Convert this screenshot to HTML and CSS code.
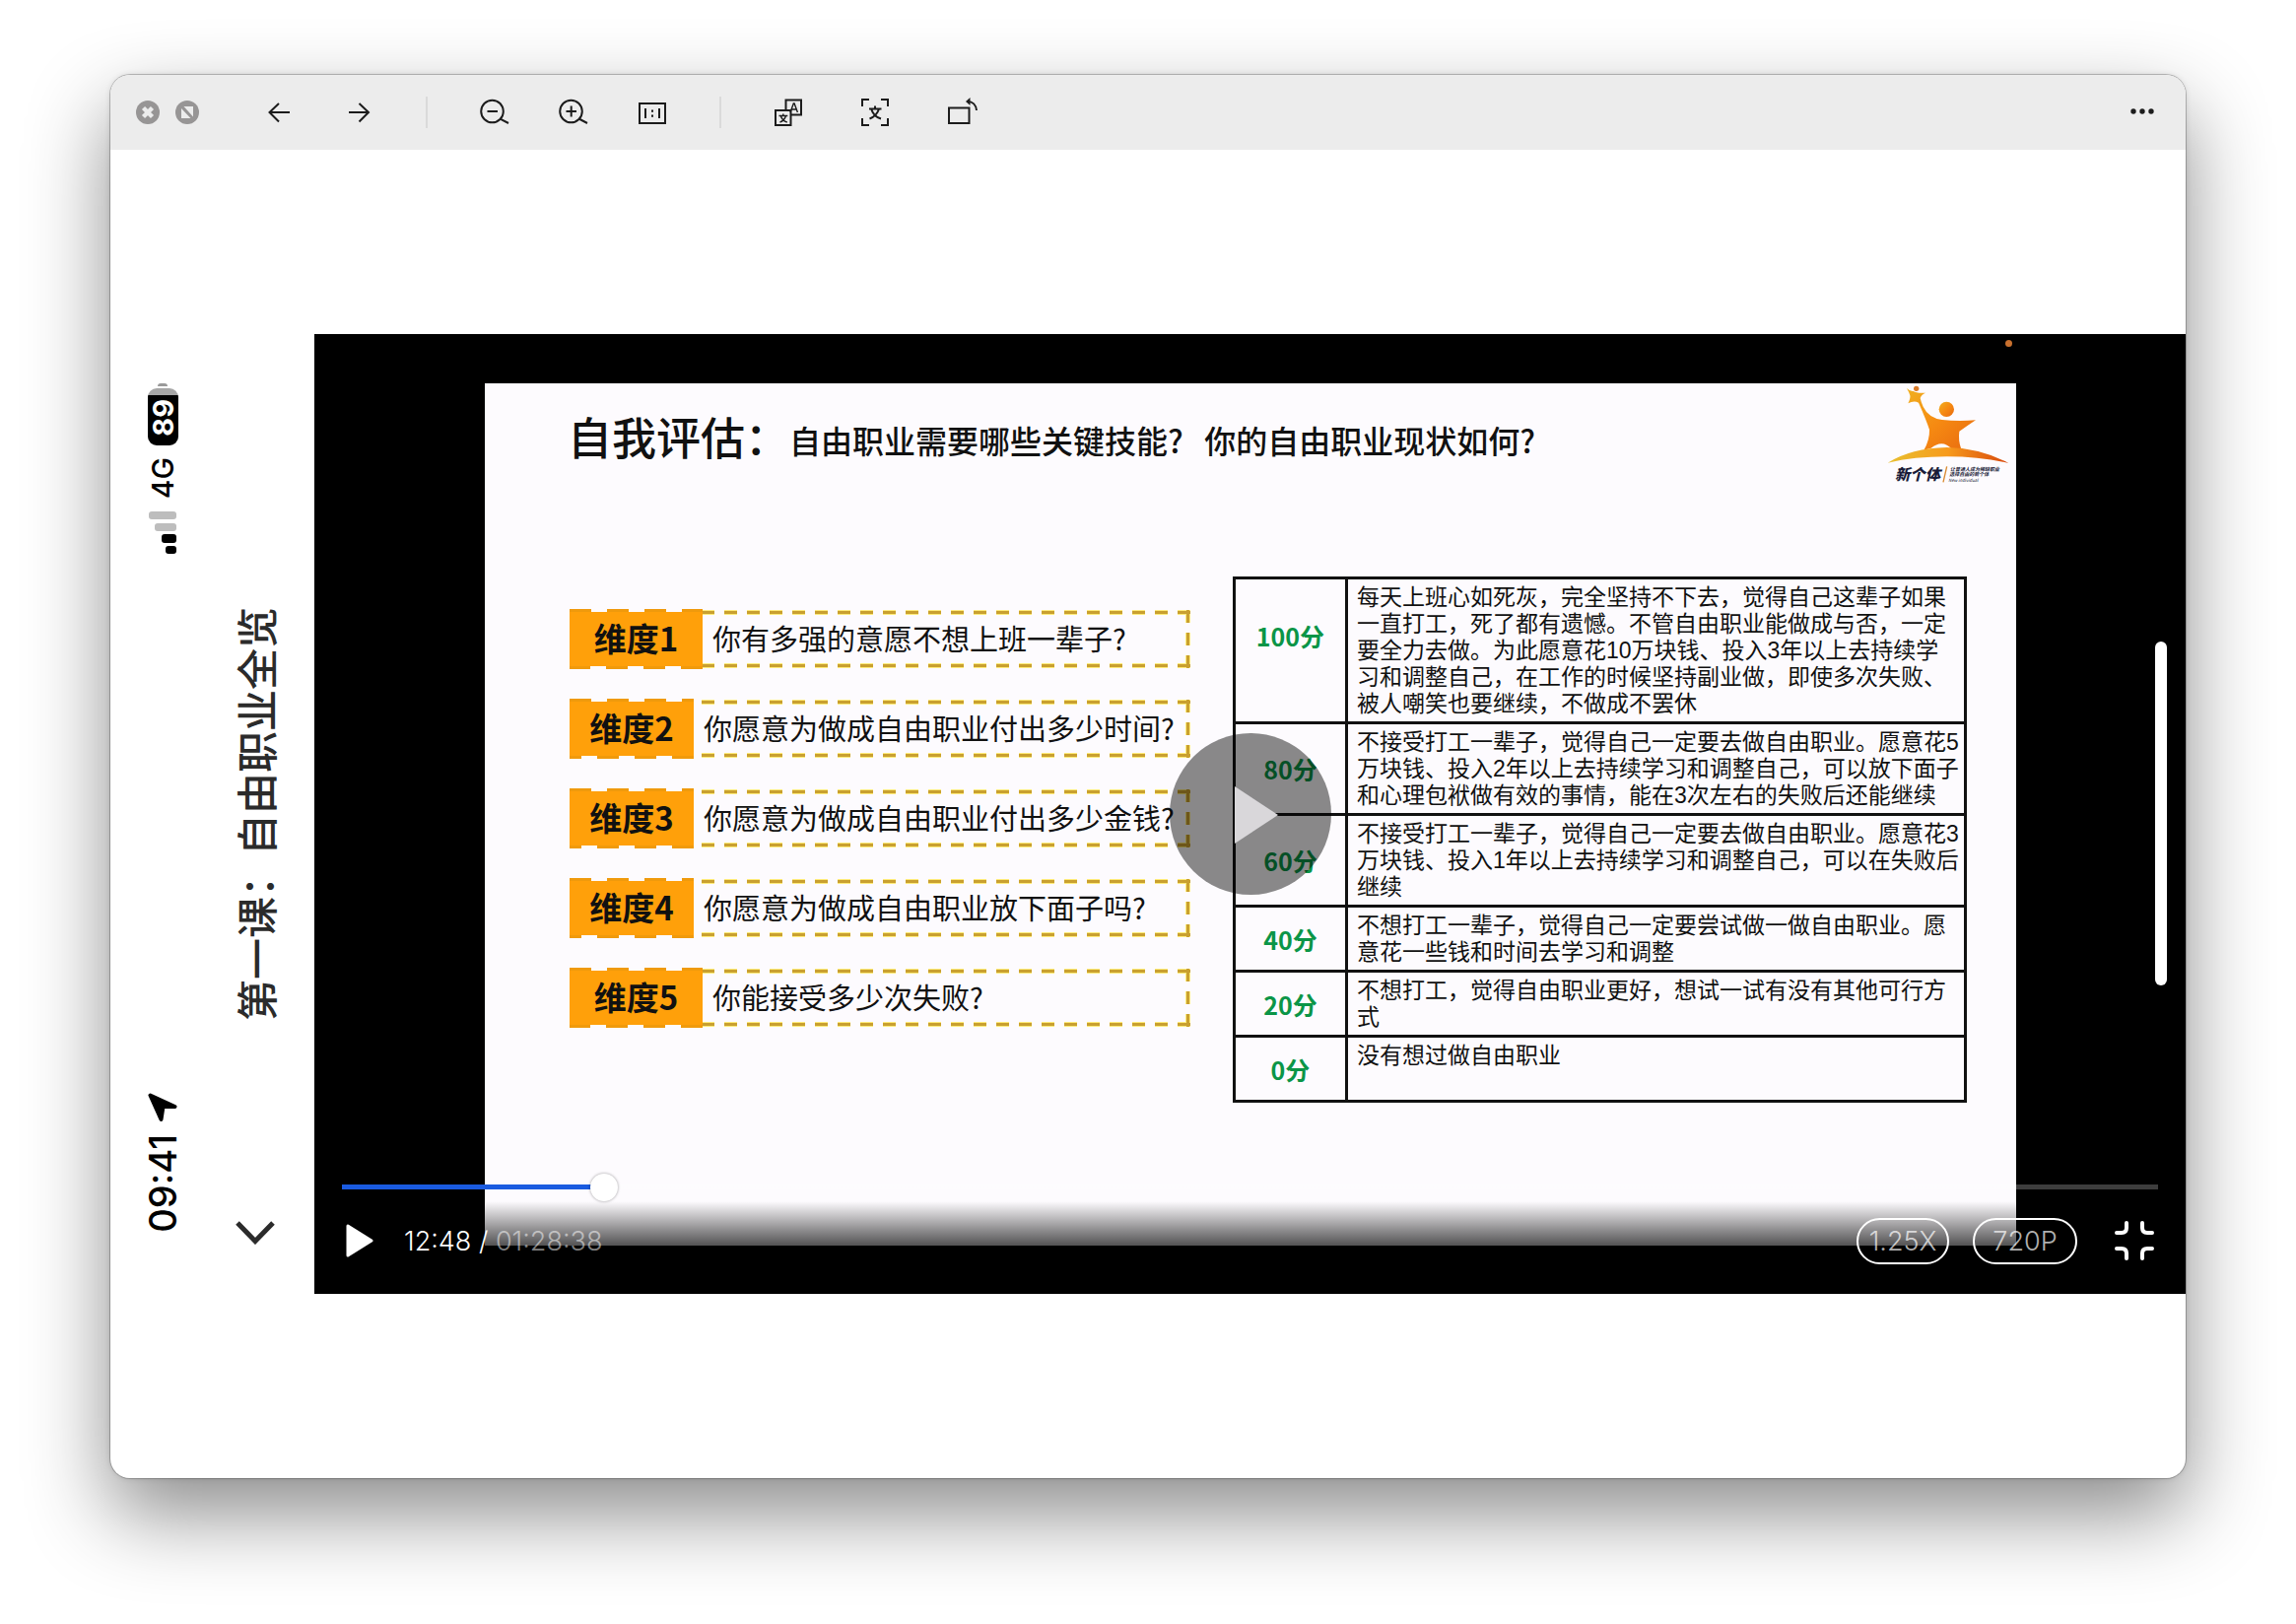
FILE: index.html
```
<!DOCTYPE html>
<html lang="zh-CN">
<head>
<meta charset="utf-8">
<meta name="viewport" content="width=device-width, initial-scale=1">
<title>第一课：自由职业全览</title>
<link rel="stylesheet" href="styles.css">
</head>
<body>
<main class="window">
  <header class="toolbar">
    <div class="window-controls">
      <button class="light" aria-label="关闭"><svg viewBox="0 0 24 24"><circle cx="12" cy="12" r="12" fill="#979595"/><path d="M7.500 7.500l9 9M16.500 7.500l-9 9" stroke="#ececec" stroke-width="4.400"/></svg></button>
      <button class="light" aria-label="全屏"><svg viewBox="0 0 24 24"><circle cx="12" cy="12" r="12" fill="#979595"/><path d="M8.500 6H18v10.500zM6 8v10h9.500z" fill="#ececec"/></svg></button>
    </div>
    <div class="tools">
      <button class="tool" aria-label="上一张"><svg viewBox="0 0 32 32"><path d="M26 16H5.500M15 7l-9.500 9 9.500 9.500"/></svg></button>
      <button class="tool" aria-label="下一张"><svg viewBox="0 0 32 32"><path d="M6 16h20M16.500 7l9.500 9-9.500 9.500"/></svg></button>
    </div>
    <span class="divider"></span>
    <div class="tools">
      <button class="tool" aria-label="缩小"><svg viewBox="0 0 32 32"><circle cx="13.500" cy="15" r="11.300"/><path d="M8.500 15h10.500M21.500 22.500l8.500 4.500"/></svg></button>
      <button class="tool" aria-label="放大"><svg viewBox="0 0 32 32"><circle cx="13.500" cy="15" r="11.300"/><path d="M8.500 15h10.500M13.700 9.500v11M21.500 22.500l8.500 4.500"/></svg></button>
      <button class="tool" aria-label="实际大小"><svg viewBox="0 0 32 32"><path d="M3 7h26v20H3zM9 12v10M23 12v10M16 13.500v2.200M16 18.500v2.200"/></svg></button>
    </div>
    <span class="divider"></span>
    <div class="tools tools-wide">
      <button class="tool" aria-label="翻译"><svg viewBox="0 0 32 32"><path d="M13.500 13V3.500h15.500v15h-10M3 14h15.500v15H3z"/><path d="M18 16l3.300-9h.8l3.300 9M19.300 13h4.700M6.500 19.500h8.800M10.800 17.500v2M7.500 26c3-1 5-3 6-6.500M8.300 19.500c1 3.500 3 5.500 6.500 6.500" stroke-width="1.400"/></svg></button>
      <button class="tool" aria-label="提取文字"><svg viewBox="0 0 32 32"><path d="M3 10V3h7M22 3h7v7M29 22v7h-7M10 29H3v-7"/><path d="M10 12.500h12.500M16 9.500v3M10.500 22.500c5-2 8-5 9.500-10M12.200 12.500c1.300 5 4.800 8.500 9.800 10"/></svg></button>
      <button class="tool" aria-label="旋转"><svg viewBox="0 0 32 32"><path d="M3 11.500h20.500v15.500H3zM22 5c5 0 8.500 3.500 9 9"/><path d="M20 5l4.500-4v8z" fill="#1c1c1c" stroke="none"/></svg></button>
    </div>
    <button class="tool more" aria-label="更多"><svg viewBox="0 0 32 32"><g fill="#1c1c1c" stroke="none"><circle cx="7" cy="15" r="2.700"/><circle cx="16" cy="15" r="2.700"/><circle cx="25" cy="15" r="2.700"/></g></svg></button>
  </header>

  <section class="viewer">
    <div class="photo">
      <aside class="phone-bar">
        <div class="status">
          <div class="status-group">
            <div class="battery"><span class="battery-cap"></span><span class="battery-body"><span class="sideways">89</span></span></div>
            <span class="sideways network">4G</span>
            <svg class="signal" viewBox="0 0 28 44"><g fill="#bdbdbd"><rect width="28" height="8" rx="3"/><rect x="6" y="12" width="22" height="8" rx="3"/></g><rect x="13" y="23" width="15" height="9" rx="3"/><rect x="17" y="35" width="11" height="8" rx="3"/></svg>
          </div>
          <div class="status-group">
            <svg class="location" viewBox="0 0 30 30"><path d="M2.500 2.500L27.500 14H15.500l-2 13z" stroke="#000" stroke-width="4" stroke-linejoin="round"/></svg>
            <span class="sideways clock">09:41</span>
          </div>
        </div>
        <div class="lesson">
          <h1 class="sideways lesson-title">第一课：自由职业全览</h1>
          <button class="back" aria-label="返回"><svg viewBox="0 0 40 24"><path d="M2 2l18 18.500L38 2" fill="none" stroke="#2b2b2b" stroke-width="5"/></svg></button>
        </div>
      </aside>

      <div class="video">
        <article class="slide">
          <header class="slide-head">
            <h2 class="slide-title">自我评估：<span class="slide-subtitle">自由职业需要哪些关键技能?   你的自由职业现状如何?</span></h2>
            <svg class="logo" viewBox="40 183 384 306" role="img" aria-label="新个体">
              <defs>
                <linearGradient id="body" x1="0" x2="1" y1="0" y2="1"><stop offset="0" stop-color="#f0b020"/><stop offset=".5" stop-color="#f68a12"/><stop offset="1" stop-color="#e86a10"/></linearGradient>
                <linearGradient id="arc" x1="0" x2="1"><stop offset="0" stop-color="#e8c030"/><stop offset=".5" stop-color="#f79a1c"/><stop offset="1" stop-color="#d8480c"/></linearGradient>
              </defs>
              <path d="M106 192Q118 203 126 201Q136 208 163 206Q150 212 147 222Q150 236 156 248Q172 282 214 288Q262 294 316 289Q288 308 266 323Q262 350 272 378H244Q215 345 180 374L158 380Q176 350 175 318Q166 290 142 236Q128 228 110 238Q118 222 116 214Q113 204 106 192Z" fill="url(#body)"/>
              <circle cx="135" cy="193" r="8" fill="#d87a28"/>
              <circle cx="227" cy="256" r="23" fill="url(#body)"/>
              <path d="M48 419Q120 374 228 372Q330 374 416 420Q330 400 228 400Q130 400 48 419Z" fill="url(#arc)"/>
              <path d="M228 430L217 478" stroke="#d98a30" stroke-width="4"/>
              <g class="logo-text">
                <text x="70" y="470" font-size="46" font-weight="900">新个体</text>
                <text x="238" y="443" font-size="15" font-weight="700">让普通人成为稀缺职业</text>
                <text x="236" y="460" font-size="15" font-weight="700">选择自由的新个体</text>
                <text x="233" y="477" font-size="13">New individual</text>
              </g>
            </svg>
          </header>

          <div class="slide-body">
            <ol class="dimensions">
              <li class="dimension"><b class="badge badge-wide">维度1</b><span class="question">你有多强的意愿不想上班一辈子?</span></li>
              <li class="dimension"><b class="badge">维度2</b><span class="question">你愿意为做成自由职业付出多少时间?</span></li>
              <li class="dimension"><b class="badge">维度3</b><span class="question">你愿意为做成自由职业付出多少金钱?</span></li>
              <li class="dimension"><b class="badge">维度4</b><span class="question">你愿意为做成自由职业放下面子吗?</span></li>
              <li class="dimension"><b class="badge badge-wide">维度5</b><span class="question">你能接受多少次失败?</span></li>
            </ol>

            <table class="scores">
              <tbody>
                <tr><th scope="row" class="raised">100分</th><td>每天上班心如死灰，完全坚持不下去，觉得自己这辈子如果<br>一直打工，死了都有遗憾。不管自由职业能做成与否，一定<br>要全力去做。为此愿意花10万块钱、投入3年以上去持续学<br>习和调整自己，在工作的时候坚持副业做，即使多次失败、<br>被人嘲笑也要继续，不做成不罢休</td></tr>
                <tr><th scope="row">80分</th><td>不接受打工一辈子，觉得自己一定要去做自由职业。愿意花5<br>万块钱、投入2年以上去持续学习和调整自己，可以放下面子<br>和心理包袱做有效的事情，能在3次左右的失败后还能继续</td></tr>
                <tr><th scope="row">60分</th><td>不接受打工一辈子，觉得自己一定要去做自由职业。愿意花3<br>万块钱、投入1年以上去持续学习和调整自己，可以在失败后<br>继续</td></tr>
                <tr><th scope="row">40分</th><td>不想打工一辈子，觉得自己一定要尝试做一做自由职业。愿<br>意花一些钱和时间去学习和调整</td></tr>
                <tr><th scope="row">20分</th><td>不想打工，觉得自由职业更好，想试一试有没有其他可行方<br>式</td></tr>
                <tr><th scope="row">0分</th><td>没有想过做自由职业<br>&nbsp;</td></tr>
              </tbody>
            </table>
          </div>
        </article>

        <span class="mic-dot"></span>
        <button class="big-play" aria-label="播放"><svg viewBox="0 0 164 164"><path d="M66 54v58l44-29z"/></svg></button>
        <span class="volume"></span>

        <div class="controls">
          <input class="seek" type="range" min="0" max="1000" value="139" aria-label="播放进度">
          <div class="control-row">
            <button class="play" aria-label="播放"><svg viewBox="0 0 28 34"><path d="M2 2v30l24-15z" fill="#fff" stroke="#fff" stroke-width="3" stroke-linejoin="round"/></svg></button>
            <span class="time">12:48 / <span class="duration">01:28:38</span></span>
            <button class="pill">1.25X</button>
            <button class="pill pill-wide">720P</button>
            <button class="shrink" aria-label="退出全屏"><svg viewBox="0 0 40 40" fill="none" stroke="#fff" stroke-width="4" stroke-linecap="round"><path d="M12 2v5q0 5-5 5H2M28 2v5q0 5 5 5h5M12 38v-5q0-5-5-5H2M28 38v-5q0-5 5-5h5"/></svg></button>
          </div>
        </div>
      </div>
    </div>
  </section>
</main>
</body>
</html>
```
FILE: styles.css
```
* { box-sizing: border-box; }

body {
  margin: 0;
  min-height: 100vh;
  padding: 76px 112px 148px;
  display: flex;
  background: #fff;
  color: #111;
  font-family: "Noto Sans CJK SC", sans-serif;
}

button {
  margin: 0;
  padding: 0;
  border: 0;
  background: none;
  color: inherit;
  font: inherit;
}

svg { display: block; width: 100%; height: 100%; }
h1, h2, ol { margin: 0; padding: 0; }

.window {
  flex: 1;
  min-width: 0;
  display: flex;
  flex-direction: column;
  overflow: hidden;
  border-radius: 20px;
  background: #fff;
  box-shadow: 0 0 0 1px rgba(0, 0, 0, .22), 0 0 6px rgba(0, 0, 0, .12), 0 36px 84px rgba(0, 0, 0, .46);
}

/* Toolbar */
.toolbar {
  display: flex;
  align-items: center;
  height: 76px;
  padding: 0 28px 0 26px;
  background: #ececec;
}
.window-controls { display: flex; gap: 16px; margin-right: 66px; }
.light { width: 24px; height: 24px; }
.tools { display: flex; gap: 48px; }
.tools-wide { gap: 56px; }
.tool { width: 32px; height: 32px; }
.tool svg { fill: none; stroke: #1c1c1c; stroke-width: 2; }
.divider { width: 2px; height: 32px; margin: 0 52px; background: #dadada; }
.more { margin-left: auto; }

/* Viewer */
.viewer { flex: 1; display: flex; align-items: center; }
.photo { flex: 1; min-width: 0; display: flex; }

.phone-bar { flex: none; display: flex; width: 207px; padding: 50px 0 50px 37px; }
.sideways {
  writing-mode: vertical-rl;
  text-orientation: sideways;
  transform: rotate(180deg);
  white-space: nowrap;
}
.status {
  display: flex;
  flex-direction: column;
  justify-content: space-between;
  width: 32px;
  padding-bottom: 12px;
  color: #000;
  font-family: Inter, sans-serif;
}
.status-group { display: flex; flex-direction: column; align-items: center; gap: 12px; }
.battery { display: flex; flex-direction: column; align-items: center; gap: 2px; }
.battery-cap { width: 10px; height: 3px; border-radius: 6px 6px 0 0; background: #9a9a9a; }
.battery-body {
  display: flex;
  align-items: flex-end;
  justify-content: center;
  width: 31px;
  height: 58px;
  padding-bottom: 10px;
  border-radius: 9px;
  background: linear-gradient(#a6a6a6 7px, #000 7px);
  color: #fff;
  font-size: 29px;
  font-weight: 700;
  line-height: 31px;
}
.network { font-size: 30px; font-weight: 500; line-height: 32px; }
.signal { width: 28px; height: 44px; }
.location { width: 30px; height: 30px; }
.clock { font-size: 38px; font-weight: 500; line-height: 32px; }

.lesson {
  display: flex;
  flex-direction: column;
  justify-content: flex-end;
  align-items: center;
  gap: 203px;
  width: 42px;
  margin-left: 57px;
}
.lesson-title { color: #2b2b2b; font-size: 42px; font-weight: 500; line-height: 42px; }
.back { width: 40px; height: 24px; }

/* Video */
.video {
  position: relative;
  flex: 1;
  min-width: 0;
  padding: 50px 172px 49px 173px;
  background: #000;
}
.slide { aspect-ratio: 16 / 9; background: #fdfbfe; }
.slide-head {
  display: flex;
  justify-content: space-between;
  align-items: flex-start;
  height: 104px;
  padding: 2px 5px 0 84px;
}
.slide-title {
  padding-top: 20px;
  font-size: 45px;
  font-weight: 500;
  line-height: 64px;
  white-space: pre;
}
.slide-subtitle { font-size: 32px; vertical-align: 2px; }
.logo { width: 128px; height: 102px; }
.logo-text { fill: #1a1c38; font-style: italic; }

.slide-body { display: flex; align-items: flex-start; gap: 43px; padding: 92px 50px 0 86px; }

.dimensions {
  display: grid;
  gap: 32px;
  width: 630px;
  padding-top: 34px;
  list-style: none;
}
.dimension {
  --gold: #c9a030 0 13px, transparent 13px 23px;
  --glow: #ffec7a 0 13px, transparent 13px 23px;
  display: flex;
  height: 59px;
  line-height: 57px;
  white-space: nowrap;
  background:
    repeating-linear-gradient(to left, var(--gold)) left top 1px / 100% 3px no-repeat,
    repeating-linear-gradient(to left, var(--gold)) left bottom 1px / 100% 3px no-repeat,
    repeating-linear-gradient(to bottom, var(--gold)) right 1px top / 3px 100% no-repeat,
    repeating-linear-gradient(to left, var(--glow)) top / 100% 5px no-repeat,
    repeating-linear-gradient(to left, var(--glow)) bottom / 100% 5px no-repeat,
    repeating-linear-gradient(to bottom, var(--glow)) right / 5px 100% no-repeat;
}
.badge {
  --edge: #f09a0c 0 22px, transparent 22px 38px;
  width: 126px;
  margin: -1px 0;
  padding: 2px 0;
  background:
    repeating-linear-gradient(to right, var(--edge)) top / 100% 3px no-repeat,
    repeating-linear-gradient(to left, var(--edge)) bottom / 100% 3px no-repeat,
    linear-gradient(#ffa00a, #ffa00a) center / 100% calc(100% - 6px) no-repeat #fdfbfe;
  font-size: 33px;
  font-weight: 700;
  line-height: 55px;
  text-align: center;
}
.badge-wide { width: 135px; }
.question { padding-left: 10px; font-size: 29px; }

.scores { flex: 1; border-collapse: collapse; }
.scores th,
.scores td { border: 3px solid #111; }
.scores th {
  width: 114px;
  padding: 0;
  color: #0b9547;
  font-size: 25px;
  font-weight: 700;
  line-height: 32px;
}
.scores .raised { padding-bottom: 30px; }
.scores td {
  padding: 5px 0 4px 9px;
  font-family: "Liberation Sans", "Noto Sans CJK SC", sans-serif;
  font-size: 23px;
  line-height: 27px;
  white-space: nowrap;
}

/* Player overlays */
.mic-dot {
  position: absolute;
  top: 6px;
  right: 176px;
  width: 7px;
  height: 7px;
  border-radius: 50%;
  background: #c8702e;
}
.big-play {
  position: absolute;
  top: 50%;
  left: 50%;
  width: 164px;
  height: 164px;
  border-radius: 50%;
  background: rgba(0, 0, 0, .46);
  transform: translate(-50%, -50%);
}
.big-play path { fill: #d9d7da; }
.volume {
  position: absolute;
  top: 312px;
  right: 19px;
  width: 12px;
  height: 349px;
  border-radius: 6px;
  background: #fff;
}
.controls { position: absolute; right: 0; bottom: 0; left: 0; }
.seek {
  display: block;
  appearance: none;
  width: calc(100% - 56px);
  height: 28px;
  margin: 0 28px;
  background: linear-gradient(to right, #1a5be0 14%, rgba(255, 255, 255, .24) 14%) center / 100% 5px no-repeat;
}
.seek::-webkit-slider-thumb {
  appearance: none;
  width: 28px;
  height: 28px;
  border-radius: 50%;
  background: #fff;
  box-shadow: 0 0 3px rgba(0, 0, 0, .4);
}
.control-row {
  display: flex;
  align-items: center;
  padding: 17px 32px 30px 32px;
  background: linear-gradient(transparent, rgba(0, 0, 0, .66) 44px);
  color: #fff;
  font-family: Inter, sans-serif;
  font-size: 27px;
  font-weight: 300;
}
.play { width: 28px; height: 34px; }
.time { margin: 0 auto 0 31px; }
.duration { color: rgba(255, 255, 255, .5); }
.pill {
  width: 94px;
  height: 47px;
  border: 2px solid #fff;
  border-radius: 24px;
  color: rgba(255, 255, 255, .7);
}
.pill-wide { width: 106px; margin: 0 38px 0 24px; }
.shrink { width: 40px; height: 40px; }
```
